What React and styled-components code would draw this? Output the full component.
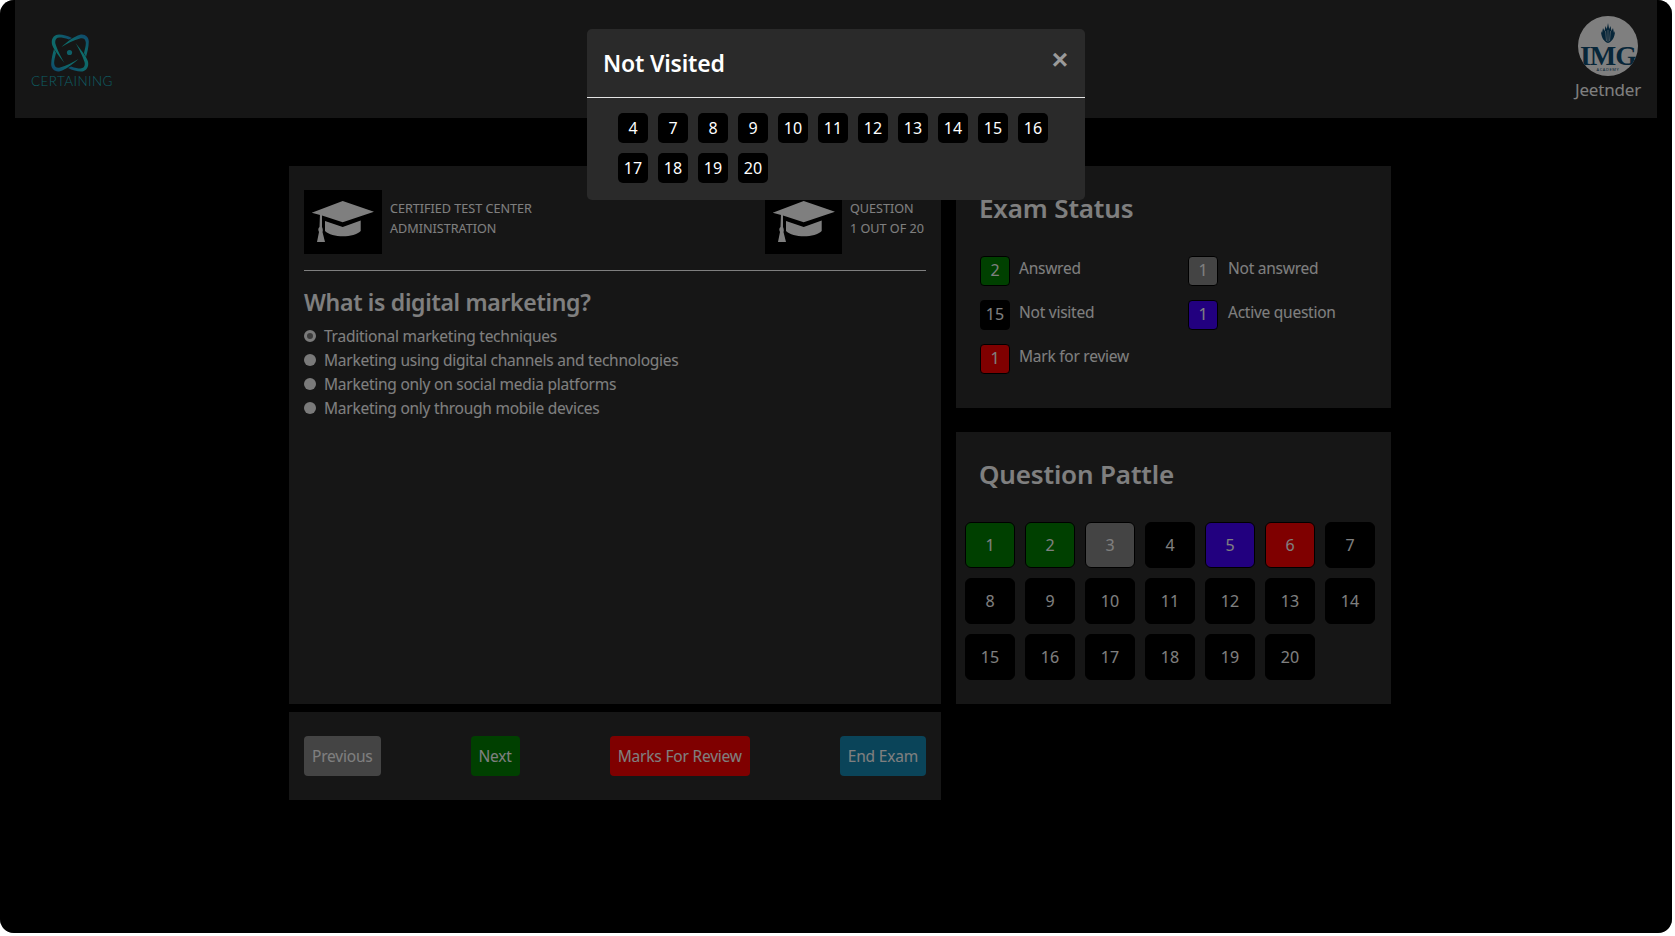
import React from 'react';
import styled, { createGlobalStyle } from 'styled-components';

const GlobalStyle = createGlobalStyle`
  html, body {
    margin: 0;
    padding: 0;
    height: 100%;
    background: #fff;
    font-family: "Noto Sans", "Open Sans", sans-serif;
  }
`;

const Frame = styled.div`
  position: relative;
  width: 1672px;
  height: 933px;
  background: #000;
  border-radius: 14px;
  overflow: hidden;
  color: #fff;
`;

const Header = styled.header`
  height: 118px;
  margin: 0 15px;
  padding: 0 15px 0 16px;
  box-sizing: border-box;
  background: #2c2c2c;
  display: flex;
  justify-content: space-between;
  align-items: flex-start;
`;

const Brand = styled.div`
  display: flex;
  flex-direction: column;
  align-items: center;
  padding-top: 34px;
  width: 82px;
`;

const LogoMark = styled.svg`
  margin-right: 5px;
`;

const BrandName = styled.span`
  font-family: "Lato", sans-serif;
  font-size: 13.5px;
  font-weight: 300;
  line-height: 14px;
  margin-top: 2px;
  letter-spacing: 0.4px;
  color: #1cbcc8;
`;

const User = styled.div`
  display: flex;
  flex-direction: column;
  align-items: center;
  padding-top: 16px;
  width: 68px;
`;

const Avatar = styled.div`
  position: relative;
  width: 60px;
  height: 60px;
  border-radius: 50%;
  background: #fff;
  overflow: hidden;
`;

const AvatarWord = styled.span`
  position: absolute;
  left: -5px;
  right: -5px;
  top: 30px;
  text-align: center;
  font-family: "Liberation Serif", serif;
  font-weight: 700;
  font-size: 28px;
  line-height: 20px;
  letter-spacing: -1px;
  color: #0f4d73;
`;

const AvatarSmall = styled.span`
  position: absolute;
  left: 0;
  right: 0;
  top: 51px;
  text-align: center;
  font-size: 4px;
  line-height: 5px;
  letter-spacing: 0.6px;
  color: #0f4d73;
`;

const UserName = styled.span`
  font-size: 17px;
  line-height: 24px;
  margin-top: 2px;
  letter-spacing: -0.2px;
  white-space: nowrap;
`;

const Main = styled.main`
  display: grid;
  grid-template-columns: 652px 435px;
  gap: 15px;
  width: 1102px;
  margin: 48px 0 0 289px;
`;

const Column = styled.div`
  display: flex;
  flex-direction: column;
`;

const Panel = styled.section`
  background: #2c2c2c;
  box-sizing: border-box;
`;

const QuestionPanel = styled(Panel)`
  height: 538px;
  padding: 24px 15px 0;
`;

const InfoRow = styled.div`
  display: flex;
  justify-content: space-between;
  height: 64px;
  padding-bottom: 16px;
  border-bottom: 1px solid #fff;
`;

const InfoBlock = styled.div`
  display: flex;
  gap: 8px;
`;

const Thumb = styled.div`
  width: ${({ $w }) => $w}px;
  height: 64px;
  background: #000;
  overflow: hidden;
`;

const InfoText = styled.div`
  min-width: 76px;
  font-size: 12.6px;
  line-height: 20px;
  padding-top: 9px;
  text-transform: uppercase;
`;

const QuestionTitle = styled.h2`
  margin: 14px 0 5px;
  font-size: 23px;
  line-height: 34px;
  font-weight: 600;
  letter-spacing: -0.3px;
`;

const OptionList = styled.div`
  display: flex;
  flex-direction: column;
`;

const Option = styled.label`
  display: flex;
  align-items: center;
  gap: 8px;
  height: 24px;
  font-size: 15.5px;
  letter-spacing: -0.25px;
`;

const RadioDot = styled.span`
  width: 12px;
  height: 12px;
  margin-bottom: 1px;
  border-radius: 50%;
  box-sizing: border-box;
  background: ${({ $on }) => ($on ? '#777' : '#f4f4f4')};
  border: ${({ $on }) => ($on ? '3px solid #f4f4f4' : 'none')};
`;

const ActionBar = styled(Panel)`
  margin-top: 8px;
  height: 88px;
  padding: 0 15px;
  display: flex;
  align-items: center;
  justify-content: space-between;
`;

const ActionButton = styled.button`
  height: 40px;
  padding: 0 8px;
  border: none;
  border-radius: 4px;
  font-family: inherit;
  font-size: 15.5px;
  letter-spacing: -0.2px;
  color: #fff;
  background: ${({ $bg }) => $bg};
`;

const StatusPanel = styled(Panel)`
  height: 242px;
  padding: 23px 24px 0;
`;

const PanelTitle = styled.h2`
  margin: 0 0 0 -1px;
  font-size: 26px;
  line-height: 38px;
  font-weight: 600;
  letter-spacing: -0.15px;
`;

const StatusGrid = styled.div`
  display: grid;
  grid-template-columns: 208px 1fr;
  row-gap: 14px;
  margin-top: 29px;
`;

const StatusItem = styled.div`
  display: flex;
  gap: 9px;
  font-size: 15.5px;
  letter-spacing: -0.25px;
  line-height: 24px;
  &:nth-child(even) {
    gap: 10px;
  }
`;

const Badge = styled.div`
  width: 30px;
  height: 30px;
  box-sizing: border-box;
  padding-bottom: 2px;
  border: 1px solid #000;
  border-radius: 4px;
  font-size: 16px;
  letter-spacing: 0;
  background: ${({ $bg }) => $bg};
  display: flex;
  align-items: center;
  justify-content: center;
`;

const PalettePanel = styled(Panel)`
  margin-top: 24px;
  height: 272px;
  padding: 23px 9px 0;
`;

const PaletteTitle = styled(PanelTitle)`
  padding-left: 15px;
`;

const PaletteGrid = styled.div`
  display: grid;
  grid-template-columns: repeat(7, 50px);
  grid-auto-rows: 46px;
  gap: 10px;
  margin-top: 29px;
`;

const PaletteButton = styled.div`
  box-sizing: border-box;
  border: 1px solid #000;
  border-radius: 6px;
  background: ${({ $bg }) => $bg};
  display: flex;
  align-items: center;
  justify-content: center;
  font-size: 16px;
`;

const Backdrop = styled.div`
  position: absolute;
  inset: 0;
  background: rgba(0, 0, 0, 0.5);
  display: flex;
  justify-content: center;
  align-items: flex-start;
  padding-top: 29px;
`;

const Modal = styled.div`
  width: 498px;
  height: 171px;
  background: #2a2a2a;
  border-radius: 5px;
`;

const ModalHead = styled.div`
  height: 69px;
  box-sizing: border-box;
  border-bottom: 1px solid #e4e4e4;
  padding: 0 16px;
  display: flex;
  justify-content: space-between;
`;

const ModalTitle = styled.h3`
  margin: 1px 0 0;
  font-size: 23px;
  font-weight: 600;
  line-height: 67px;
  letter-spacing: -0.2px;
`;

const CloseButton = styled.span`
  font-family: "Liberation Sans", sans-serif;
  font-size: 28px;
  font-weight: 700;
  line-height: 61px;
  margin-right: 1px;
  color: #9a9a9a;
`;

const ModalBody = styled.div`
  display: grid;
  grid-template-columns: repeat(11, 30px);
  grid-auto-rows: 30px;
  gap: 10px;
  padding: 15px 31px;
`;

const Chip = styled.div`
  background: #000;
  border-radius: 5px;
  padding-bottom: 1px;
  display: flex;
  align-items: center;
  justify-content: center;
  font-size: 16px;
`;

const CrownMark = styled.svg`
  position: absolute;
  left: 23px;
  top: 7px;
`;

const green = '#008000';
const gray = '#888888';
const red = '#ff0000';
const purple = '#4400ff';
const black = '#000000';

const statuses = [
  { n: 2, label: 'Answred', bg: green },
  { n: 1, label: 'Not answred', bg: gray },
  { n: 15, label: 'Not visited', bg: black },
  { n: 1, label: 'Active question', bg: purple },
  { n: 1, label: 'Mark for review', bg: red },
];

const paletteColors = { 1: green, 2: green, 3: gray, 5: purple, 6: red };
const questions = Array.from({ length: 20 }, (_, i) => i + 1);
const notVisited = questions.filter((n) => !paletteColors[n]);

const options = [
  'Traditional marketing techniques',
  'Marketing using digital channels and technologies',
  'Marketing only on social media platforms',
  'Marketing only through mobile devices',
];

const Swooshes = () => (
  <>
    <path
      fill="url(#lg)"
      d="M13.500 29C8 22 3 16 1.200 11C-.5 5 3 .5 8 .5C12 .5 17 2 21 4L18 5.500C14 4 11 3.500 8.500 3.500C5 3.500 3.500 6.500 4.500 10C6 15 10 23 13.500 29Z"
    />
    <path
      fill="url(#lg)"
      d="M10.500 13C16 8 23 2.500 29 .8C34 -.3 38 3 37.800 8C37.600 13 36.500 18 35 23L33 19C34 15 35 11.500 34.800 8.500C34.600 5 32 3.500 29 4.500C23 6 16 9.500 10.500 13Z"
    />
  </>
);

const Logo = () => (
  <LogoMark width="38" height="38" viewBox="0 0 38 38">
    <defs>
      <linearGradient id="lg" x1="0" y1="1" x2="1" y2="0">
        <stop offset="0" stopColor="#1ce8d4" />
        <stop offset=".6" stopColor="#1cc8d4" />
        <stop offset="1" stopColor="#2088d8" />
      </linearGradient>
    </defs>
    <Swooshes />
    <g transform="rotate(180 19 19)">
      <Swooshes />
    </g>
    <circle cx="18.500" cy="18.500" r="2.600" fill="#1cc0d0" />
  </LogoMark>
);

const Crown = () => (
  <CrownMark width="14" height="21" viewBox="0 0 14 21">
    <path
      fill="#0f4d73"
      d="M7 0L8.200 6L9.500 3L10.500 8L12 5L13 10L14 8C14 14 11 19 7 20C3 19 0 14 0 8L1 10L2 5L3.500 8L4.500 3L5.800 6Z"
    />
    <path
      stroke="#fff"
      strokeWidth=".5"
      d="M4.500 8L5.500 18M7 7V19M9.500 8L8.500 18"
    />
  </CrownMark>
);

const Cap = () => (
  <svg width="78" height="64" viewBox="0 0 78 64">
    <path fill="#fff" d="M38.700 11L70 21.700L38.700 32.300L18 25.500L7.700 22.700z" />
    <path fill="#fff" d="M21 31L38.700 37L56.700 30.500V41C50 48 28 48 21 41z" />
    <path
      fill="#fff"
      d="M16 24L18 25L18 37C19 39 19 41 18.500 42L21 52H13L15 42C14 40 14 38 15.500 37z"
    />
  </svg>
);

const App = () => (
  <Frame>
    <GlobalStyle />
    <Header>
      <Brand>
        <Logo />
        <BrandName>CERTAINING</BrandName>
      </Brand>
      <User>
        <Avatar>
          <Crown />
          <AvatarWord>IMG</AvatarWord>
          <AvatarSmall>ACADEMY</AvatarSmall>
        </Avatar>
        <UserName>Jeetnder</UserName>
      </User>
    </Header>

    <Main>
      <Column>
        <QuestionPanel>
          <InfoRow>
            <InfoBlock>
              <Thumb $w={78}>
                <Cap />
              </Thumb>
              <InfoText>
                Certified test center
                <br />
                Administration
              </InfoText>
            </InfoBlock>
            <InfoBlock>
              <Thumb $w={77}>
                <Cap />
              </Thumb>
              <InfoText>
                Question
                <br />1 out of 20
              </InfoText>
            </InfoBlock>
          </InfoRow>
          <QuestionTitle>What is digital marketing?</QuestionTitle>
          <OptionList>
            {options.map((o, i) => (
              <Option key={o}>
                <RadioDot $on={i === 0} />
                {o}
              </Option>
            ))}
          </OptionList>
        </QuestionPanel>
        <ActionBar>
          <ActionButton $bg={gray}>Previous</ActionButton>
          <ActionButton $bg={green}>Next</ActionButton>
          <ActionButton $bg={red}>Marks For Review</ActionButton>
          <ActionButton $bg="#1488b2">End Exam</ActionButton>
        </ActionBar>
      </Column>

      <Column>
        <StatusPanel>
          <PanelTitle>Exam Status</PanelTitle>
          <StatusGrid>
            {statuses.map((s) => (
              <StatusItem key={s.label}>
                <Badge $bg={s.bg}>{s.n}</Badge>
                {s.label}
              </StatusItem>
            ))}
          </StatusGrid>
        </StatusPanel>
        <PalettePanel>
          <PaletteTitle>Question Pattle</PaletteTitle>
          <PaletteGrid>
            {questions.map((n) => (
              <PaletteButton key={n} $bg={paletteColors[n] || black}>
                {n}
              </PaletteButton>
            ))}
          </PaletteGrid>
        </PalettePanel>
      </Column>
    </Main>

    <Backdrop>
      <Modal>
        <ModalHead>
          <ModalTitle>Not Visited</ModalTitle>
          <CloseButton>×</CloseButton>
        </ModalHead>
        <ModalBody>
          {notVisited.map((n) => (
            <Chip key={n}>{n}</Chip>
          ))}
        </ModalBody>
      </Modal>
    </Backdrop>
  </Frame>
);

export default App;
